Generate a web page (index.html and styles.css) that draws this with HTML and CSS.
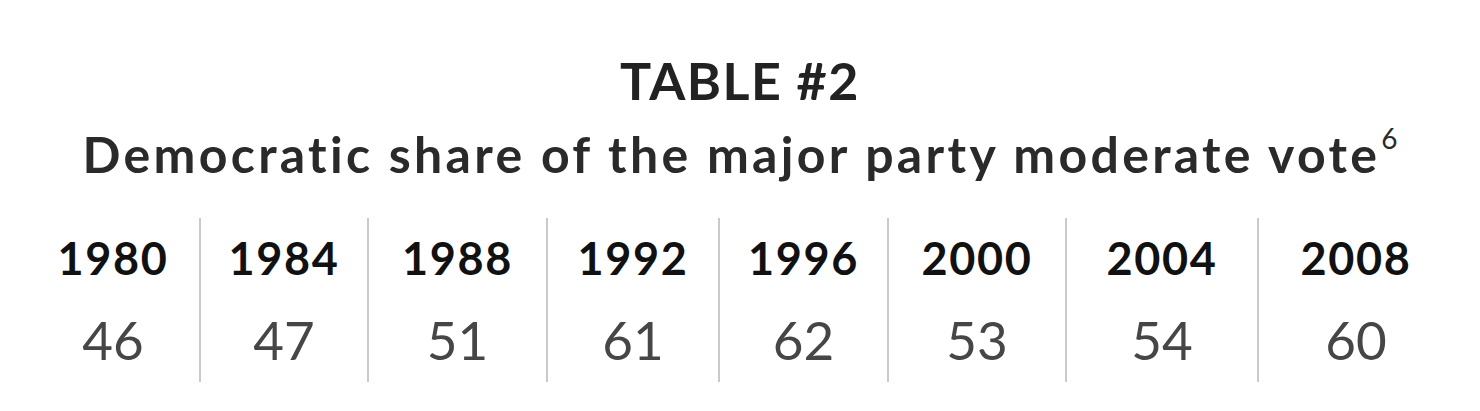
FILE: index.html
```html
<!DOCTYPE html>
<html>
<head>
<meta charset="utf-8">
<link rel="stylesheet" href="styles.css">
</head>
<body>
<div class="figure">
  <h1 class="title">TABLE #2</h1>
  <p class="subtitle">Democratic share of the major party moderate vote<sup>6</sup></p>
  <div class="table">
    <div class="col"><div class="year">1980</div><div class="val">46</div></div>
    <div class="col"><div class="year">1984</div><div class="val">47</div></div>
    <div class="col"><div class="year">1988</div><div class="val">51</div></div>
    <div class="col"><div class="year">1992</div><div class="val">61</div></div>
    <div class="col"><div class="year">1996</div><div class="val">62</div></div>
    <div class="col"><div class="year">2000</div><div class="val">53</div></div>
    <div class="col"><div class="year">2004</div><div class="val">54</div></div>
    <div class="col"><div class="year">2008</div><div class="val">60</div></div>
  </div>
</div>
</body>
</html>
```
FILE: styles.css
```css
html, body {
  margin: 0;
  padding: 0;
  background: #ffffff;
}
body {
  font-family: Lato, "Noto Sans", sans-serif;
  width: 1480px;
  height: 411px;
  overflow: hidden;
}
.figure {
  padding-top: 50px;
}
.title {
  margin: 0;
  text-align: center;
  font-size: 52px;
  line-height: 60px;
  font-weight: 700;
  color: #222222;
  letter-spacing: 1.5px;
}
.subtitle {
  margin: 14px 0 0 0;
  text-align: center;
  font-size: 50px;
  line-height: 60px;
  font-weight: 700;
  color: #2a2a2a;
  letter-spacing: 3.3px;
}
.subtitle sup {
  font-size: 28px;
  font-weight: 400;
  vertical-align: top;
  line-height: 28px;
  margin-left: 1px;
  letter-spacing: 0;
}
.table {
  margin: 34px 0 0 27px;
  display: grid;
  grid-template-columns: 172px 168px 179px 172px 169px 178px 192px 196px;
}
.col {
  height: 164px;
  box-sizing: border-box;
  text-align: center;
}
.col + .col {
  border-left: 2px solid #cacacd;
}
.year {
  padding-top: 12px;
  font-size: 45px;
  line-height: 56px;
  font-weight: 700;
  color: #111111;
  letter-spacing: 1.6px;
}
.val {
  padding-top: 26px;
  font-size: 53px;
  line-height: 56px;
  font-weight: 400;
  color: #464646;
}
```
